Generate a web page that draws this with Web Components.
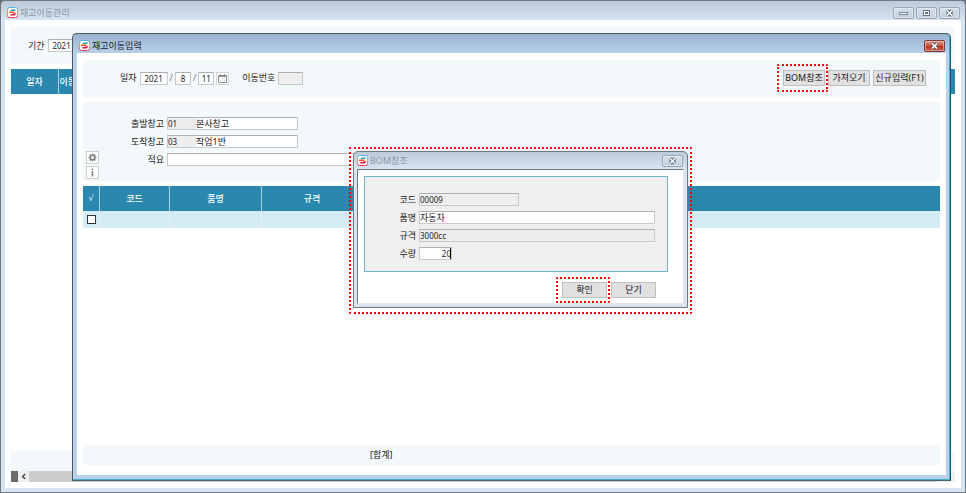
<!DOCTYPE html>
<html lang="ko">
<head>
<meta charset="utf-8">
<meta name="viewport" content="width=device-width, initial-scale=1">
<title>재고이동관리</title>
<style>
  html, body {
    height: 100%;
    margin: 0;
  }

  body {
    background-color: #6f7276;
    font: 9px/12px "Noto Sans", "Noto Sans CJK KR", sans-serif;
    color: #222;
  }
</style>
</head>
<body>
<stock-desktop></stock-desktop>

<script>
customElements.define('app-logo', class extends HTMLElement {
  #template = /* html */ `
    <svg viewBox="0 0 11 11" aria-hidden="true">
      <defs>
        <linearGradient id="edge" x1="0" y1="0" x2="0" y2="1">
          <stop offset="0" stop-color="#4fb4da"/>
          <stop offset="0.5" stop-color="#f2a07c"/>
          <stop offset="1" stop-color="#e8375c"/>
        </linearGradient>
      </defs>
      <rect x="0.500" y="0.500" width="10" height="10" rx="2" fill="#fff" stroke="url(#edge)"/>
      <path d="M4.500 2.500H9L8 4H3.500z" fill="#1f9fb4"/>
      <path d="M2 4.500h5.500L6.500 6H2z" fill="#f4511e"/>
      <path d="M3.500 7H9L8 8.500H3z" fill="#dc2350"/>
      <path d="M6 5.500h2.500L9 7H6z" fill="#ee5a6c"/>
    </svg>
  `

  #style = /* css */ `
    :host {
      display: block;
      width: 11px;
      height: 11px;
    }

    svg {
      display: block;
      width: 100%;
      height: 100%;
    }
  `

  constructor () {
    super()
    this.attachShadow({ mode: 'open' }).innerHTML = `${this.#template} <style>${this.#style}</style>`
  }
})

// 창 틀: 제목줄 + 본문 슬롯
customElements.define('erp-window', class extends HTMLElement {
  #icons = {
    min: '<svg viewBox="0 0 9 8"><rect x="0.500" y="3.500" width="8" height="2" fill="#fff" stroke="#7b8591"/></svg>',
    max: '<svg viewBox="0 0 9 8"><rect x="1.500" y="1.500" width="6" height="5" fill="#fff" stroke="#6b7581"/><rect x="3.500" y="3.500" width="2" height="1" fill="none" stroke="#6b7581"/></svg>',
    close: '<svg viewBox="0 0 9 8"><path d="M2 1.500l5 5M7 1.500l-5 5" stroke="#59636f" stroke-width="3.400"/><path d="M2 1.500l5 5M7 1.500l-5 5" stroke="#fff" stroke-width="1.600"/></svg>'
  }

  #names = { min: '최소화', max: '최대화', close: '창 닫기' }

  #style = /* css */ `
    :host {
      display: flex;
      flex-direction: column;
      box-sizing: border-box;
      border: 1px solid #74797f;
      border-radius: 5px 5px 0 0;
      padding: 0 4px 4px;
      background: linear-gradient(#bccbda, #d7e4f1 20px);
    }

    :host([tone="active"]) {
      border-color: #50565c #1d5566 #45636c #50565c;
      padding-bottom: 5px;
      background: linear-gradient(#98b3d1, #b9d1ea 20px);
      box-shadow: inset -1px -1px #48b0c8;
    }

    :host([tone="dialog"]) {
      padding: 0 3px 3px;
      background: linear-gradient(#bccbda, #d7e4f1 17px);
    }

    .title-bar {
      display: flex;
      align-items: center;
      gap: 2px;
      box-sizing: border-box;
      height: 19px;
      padding: 4px 1px 0 2px;
      color: #8c98a5;
    }

    :host([tone="active"]) .title-bar {
      color: #17222e;
    }

    :host([tone="dialog"]) .title-bar {
      height: 17px;
      padding: 0 1px 0 0;
    }

    h1 {
      flex: 1;
      margin: 0;
      font: inherit;
    }

    button {
      display: flex;
      align-items: center;
      justify-content: center;
      box-sizing: border-box;
      width: 21px;
      height: 12px;
      padding: 0;
      border: 1px solid #98a6b6;
      border-radius: 2px;
      background: linear-gradient(#d3deea, #c3d1e0);
      box-shadow: inset 0 0 0 1px #ffffff66;
    }

    :host([tone="active"]) button {
      border-color: #7c3a36;
      background: linear-gradient(#dc9a8c, #c9523d 50%, #b8331d 51%, #cc6048);
    }

    svg {
      display: block;
      width: 9px;
      height: 8px;
    }

    .body {
      display: flex;
      flex-direction: column;
      flex: 1;
      box-sizing: border-box;
      gap: 5px;
      padding: 7px 6px 6px;
      background-color: #fff;
    }

    :host([tone="active"]) .body {
      padding-bottom: 10px;
    }

    :host([tone="dialog"]) .body {
      gap: 10px;
      padding: 6px 15px 5px 6px;
      border: 1px solid #73777c;
      border-right-color: #e4e8ec;
      border-bottom-color: #e4e8ec;
    }
  `

  constructor () {
    super()
    const buttons = this.getAttribute('controls').split(' ').map(name =>
      `<button type="button" aria-label="${this.#names[name]}">${this.#icons[name]}</button>`
    ).join('')
    this.attachShadow({ mode: 'open' }).innerHTML = /* html */ `
      <header class="title-bar">
        <app-logo></app-logo>
        <h1>${this.getAttribute('caption')}</h1>
        ${buttons}
      </header>
      <div class="body"><slot></slot></div>
      <style>${this.#style}</style>
    `
  }
})

customElements.define('erp-band', class extends HTMLElement {
  #style = /* css */ `
    :host {
      display: flex;
      align-items: center;
      box-sizing: border-box;
      background-color: #f3f8fb;
    }
  `

  constructor () {
    super()
    this.attachShadow({ mode: 'open' }).innerHTML = `<slot></slot> <style>${this.#style}</style>`
  }
})

// 라벨 + 입력칸, code 속성이 있으면 앞에 코드칸이 붙는다
customElements.define('text-field', class extends HTMLElement {
  #style = /* css */ `
    :host {
      display: flex;
      align-items: center;
      gap: 3px;
    }

    label {
      flex: none;
      width: var(--label-width, auto);
      text-align: right;
      white-space: nowrap;
    }

    .box {
      display: flex;
      position: relative;
      width: var(--field-width, 100px);
    }

    input {
      flex: 1;
      box-sizing: border-box;
      min-width: 0;
      height: 13px;
      margin: 0;
      padding: 0;
      border: 1px solid #c6c9cb;
      border-top-color: #adb1b4;
      border-radius: 0;
      outline: none;
      background-color: #fff;
      color: inherit;
      font: inherit;
      line-height: 11px;
    }

    input[readonly] {
      background-color: #eee;
    }

    .number {
      font-size: 8px;
    }

    .code {
      flex: none;
      width: 28px;
      border-right: 0;
      font-size: 8px;
    }

    .code + input {
      border-left-color: #e4e6e7;
    }

    :host([align="right"]) input {
      text-align: right;
    }

    :host([align="center"]) input {
      text-align: center;
    }

    :host([caret]) .box::after {
      content: "";
      position: absolute;
      top: 1px;
      bottom: 1px;
      right: 1px;
      width: 1px;
      background-color: #000;
    }
  `

  constructor () {
    super()
    const label = this.getAttribute('label')
    const value = this.getAttribute('value') ?? ''
    const code = this.getAttribute('code')
    this.attachShadow({ mode: 'open' }).innerHTML = /* html */ `
      ${this.hasAttribute('bare') ? '' : `<label for="field">${label}</label>`}
      <div class="box">
        ${code ? `<input class="code" aria-label="${label} 코드" value="${code}" readonly>` : ''}
        <input id="field" class="${/^\d/.test(value) ? 'number' : ''}" value="${value}"
          ${this.hasAttribute('bare') ? `aria-label="${label}"` : ''}
          ${this.hasAttribute('readonly') ? 'readonly' : ''}>
      </div>
      <style>${this.#style}</style>
    `
  }
})

customElements.define('date-field', class extends HTMLElement {
  #template = /* html */ `
    <text-field class="year" label="일자" value="2021" align="center"></text-field>
    <span>/</span>
    <text-field class="part" label="월" value="8" align="center" bare></text-field>
    <span>/</span>
    <text-field class="part" label="일" value="11" align="center" bare></text-field>
    <button type="button" aria-label="달력">
      <svg viewBox="0 0 9 9">
        <path d="M0.500 1.500h8v7h-8z" fill="#fff" stroke="#8f8f8f"/>
        <path d="M0 2.500h9M2.500 0v2M6.500 0v2" stroke="#8f8f8f"/>
        <path d="M2 4.500h5M2 6.500h5" stroke="#c4c4c4" stroke-dasharray="1 1"/>
      </svg>
    </button>
  `

  #style = /* css */ `
    :host {
      display: flex;
      align-items: center;
      gap: 2px;
    }

    .year {
      --field-width: 28px;
    }

    .part {
      --field-width: 16px;
    }

    span {
      color: #777;
    }

    button {
      display: flex;
      align-items: center;
      justify-content: center;
      width: 13px;
      height: 13px;
      padding: 0;
      border: 1px solid #d4d7d9;
      background-color: #fff;
    }

    svg {
      flex: none;
      width: 9px;
      height: 9px;
    }
  `

  constructor () {
    super()
    this.attachShadow({ mode: 'open' }).innerHTML = `${this.#template} <style>${this.#style}</style>`
  }
})

customElements.define('erp-button', class extends HTMLElement {
  #style = /* css */ `
    :host {
      display: block;
    }

    button {
      display: flex;
      align-items: center;
      justify-content: center;
      box-sizing: border-box;
      width: var(--button-width, 42px);
      height: 16px;
      padding: 0;
      border: 1px solid #bfbfbf;
      border-radius: 0;
      background-color: #e1e1e1;
      color: inherit;
      font: inherit;
      white-space: nowrap;
    }
  `

  constructor () {
    super()
    this.attachShadow({ mode: 'open' }).innerHTML = `<button type="button"><slot></slot></button> <style>${this.#style}</style>`
  }
})

// 빨간 점선 강조
customElements.define('marked-area', class extends HTMLElement {
  #style = /* css */ `
    :host {
      display: block;
      position: relative;
    }

    .mark {
      position: absolute;
      inset: var(--mark-inset, -6px -3px -6px -6px);
      border: 2px dotted #f00;
      border-radius: 2px;
      pointer-events: none;
    }
  `

  constructor () {
    super()
    this.attachShadow({ mode: 'open' }).innerHTML = `<slot></slot><div class="mark"></div> <style>${this.#style}</style>`
  }
})

customElements.define('side-tools', class extends HTMLElement {
  #template = /* html */ `
    <button type="button" aria-label="설정">
      <svg viewBox="0 0 18 18">
        <circle cx="9" cy="9" r="4.500" fill="none" stroke="#808080" stroke-width="3"/>
        <path d="M9 1v3M9 14v3M1 9h3M14 9h3M3.300 3.300l2 2M12.700 12.700l2 2M14.700 3.300l-2 2M5.300 12.700l-2 2" stroke="#808080" stroke-width="3"/>
      </svg>
    </button>
    <button type="button" aria-label="정보">
      <svg viewBox="0 0 18 18">
        <path d="M9 1v3M9 6v11" stroke="#808080" stroke-width="3"/>
      </svg>
    </button>
  `

  #style = /* css */ `
    :host {
      display: flex;
      flex-direction: column;
      gap: 2px;
    }

    button {
      display: flex;
      align-items: center;
      justify-content: center;
      width: 13px;
      height: 13px;
      padding: 0;
      border: 1px solid #cbced0;
      background-color: #fff;
    }

    svg {
      width: 9px;
      height: 9px;
    }
  `

  constructor () {
    super()
    this.attachShadow({ mode: 'open' }).innerHTML = `${this.#template} <style>${this.#style}</style>`
  }
})

customElements.define('data-grid', class extends HTMLElement {
  #style = /* css */ `
    :host {
      display: block;
    }

    table {
      width: 100%;
      border-spacing: 0;
      table-layout: fixed;
    }

    th, td {
      box-sizing: border-box;
      padding: 0;
      border-right: 1px solid #a8d0e0;
      text-align: center;
      white-space: nowrap;
      overflow: hidden;
    }

    th {
      height: 25px;
      background-color: #2a87ad;
      color: #fff;
      font-weight: 500;
    }

    .check {
      font: 8px/12px "DejaVu Sans", sans-serif;
    }

    td {
      height: 17px;
      border-right-color: #e3f2f6;
      background-color: #d4ecf4;
    }

    th:last-child, td:last-child {
      border-right: 0;
    }

    input {
      display: block;
      box-sizing: border-box;
      width: 9px;
      height: 9px;
      margin: 0 auto;
      appearance: none;
      border: 1px solid #333;
      background-color: #fff;
    }
  `

  constructor () {
    super()
    const columns = JSON.parse(this.getAttribute('columns'))
    const cells = columns.map((column, i) => i === 0
      ? '<td><input type="checkbox" aria-label="행 선택"></td>'
      : '<td></td>').join('')
    this.attachShadow({ mode: 'open' }).innerHTML = /* html */ `
      <table>
        <colgroup>${columns.map(([, width]) => `<col ${width ? `style="width: ${width}px"` : ''}>`).join('')}</colgroup>
        <thead><tr>${columns.map(([name]) => `<th class="${name === '√' ? 'check' : ''}">${name}</th>`).join('')}</tr></thead>
        ${this.hasAttribute('empty-row') ? `<tbody><tr>${cells}</tr></tbody>` : ''}
      </table>
      <style>${this.#style}</style>
    `
  }
})

customElements.define('scroll-strip', class extends HTMLElement {
  #template = /* html */ `
    <div class="grip"></div>
    <button type="button" aria-label="왼쪽으로">
      <svg viewBox="0 0 8 8"><path d="M6 1L3 4l3 3" fill="none" stroke="#444" stroke-width="1.600"/></svg>
    </button>
    <div class="thumb"></div>
  `

  #style = /* css */ `
    :host {
      display: flex;
      height: 11px;
      padding-right: 18px;
      background-color: #f0f0f0;
    }

    .grip {
      width: 7px;
      background-color: #6b6b6b;
    }

    button {
      width: 11px;
      padding: 0;
      border: 0;
      background: none;
    }

    svg {
      display: block;
      width: 7px;
      height: 7px;
      margin: 0 auto;
    }

    .thumb {
      flex: 1;
      background-color: #cdcdcd;
    }
  `

  constructor () {
    super()
    this.attachShadow({ mode: 'open' }).innerHTML = `${this.#template} <style>${this.#style}</style>`
  }
})

customElements.define('stock-desktop', class extends HTMLElement {
  #template = /* html */ `
    <erp-window class="manage" caption="재고이동관리" controls="min max close">
      <erp-band class="period">
        <text-field label="기간" value="2021" align="center"></text-field>
      </erp-band>
      <data-grid columns='[["일자", 48], ["이동번호", 35], ["", 0]]'></data-grid>
      <div class="bottom">
        <erp-band class="total"></erp-band>
        <scroll-strip></scroll-strip>
      </div>
    </erp-window>

    <erp-window class="entry" tone="active" caption="재고이동입력" controls="close">
      <erp-band class="toolbar">
        <date-field></date-field>
        <text-field class="move-no" label="이동번호" readonly></text-field>
        <div class="actions">
          <marked-area><erp-button>BOM참조</erp-button></marked-area>
          <erp-button>가져오기</erp-button>
          <erp-button class="wide">신규입력(F1)</erp-button>
        </div>
      </erp-band>
      <erp-band class="head">
        <side-tools></side-tools>
        <div class="rows">
          <text-field label="출발창고" code="01" value="본사창고"></text-field>
          <text-field label="도착창고" code="03" value="작업1반"></text-field>
          <text-field class="memo" label="적요"></text-field>
        </div>
      </erp-band>
      <data-grid empty-row columns='[["√", 17], ["코드", 70], ["품명", 92], ["규격", 101], ["", 0]]'></data-grid>
      <erp-band class="total bottom">[합계]</erp-band>
    </erp-window>

    <marked-area class="bom">
      <erp-window tone="dialog" caption="BOM참조" controls="close">
        <div class="panel">
          <text-field class="short" label="코드" value="00009" readonly></text-field>
          <text-field label="품명" value="자동차"></text-field>
          <text-field label="규격" value="3000cc" readonly></text-field>
          <text-field class="count" label="수량" value="20" align="right" caret></text-field>
        </div>
        <div class="confirm">
          <marked-area><erp-button>확인</erp-button></marked-area>
          <erp-button>닫기</erp-button>
        </div>
      </erp-window>
    </marked-area>
  `

  #style = /* css */ `
    :host {
      display: flex;
      position: relative;
      height: 100%;
    }

    .manage {
      flex: 1;
    }

    .period {
      padding: 12px 17px;
      --field-width: 28px;
    }

    .bottom {
      margin-top: auto;
    }

    .total {
      min-height: 20px;
      padding-left: 287px;
    }

    .entry {
      position: absolute;
      inset: 33px 15px 12px 72px;
    }

    .toolbar {
      gap: 13px;
      padding: 10px 14px 11px 37px;
    }

    .move-no {
      --field-width: 25px;
    }

    .actions {
      display: flex;
      gap: 3px;
      margin-left: auto;
    }

    .wide {
      --button-width: 53px;
    }

    .head {
      align-items: flex-end;
      padding: 15px 3px 2px;
    }

    .rows {
      display: flex;
      flex-direction: column;
      gap: 5px;
      padding-bottom: 13px;
      --label-width: 65px;
      --field-width: 131px;
    }

    .memo {
      --field-width: 400px;
    }

    .bom {
      position: absolute;
      top: 151px;
      left: 353px;
      width: 335px;
      --mark-inset: -4px -4px -6px;
    }

    .bom marked-area {
      --mark-inset: -5px -3px -5px -6px;
    }

    .panel {
      display: flex;
      flex-direction: column;
      gap: 5px;
      padding: 16px 12px 11px;
      border: 1px solid #73b1cb;
      background-color: #efefef;
      --label-width: 39px;
      --field-width: 237px;
    }

    .short {
      --field-width: 100px;
    }

    .count {
      --field-width: 33px;
    }

    .confirm {
      display: flex;
      justify-content: flex-end;
      gap: 4px;
      padding-right: 12px;
      --button-width: 45px;
    }
  `

  constructor () {
    super()
    this.attachShadow({ mode: 'open' }).innerHTML = `${this.#template} <style>${this.#style}</style>`
  }
})
</script>
</body>
</html>
